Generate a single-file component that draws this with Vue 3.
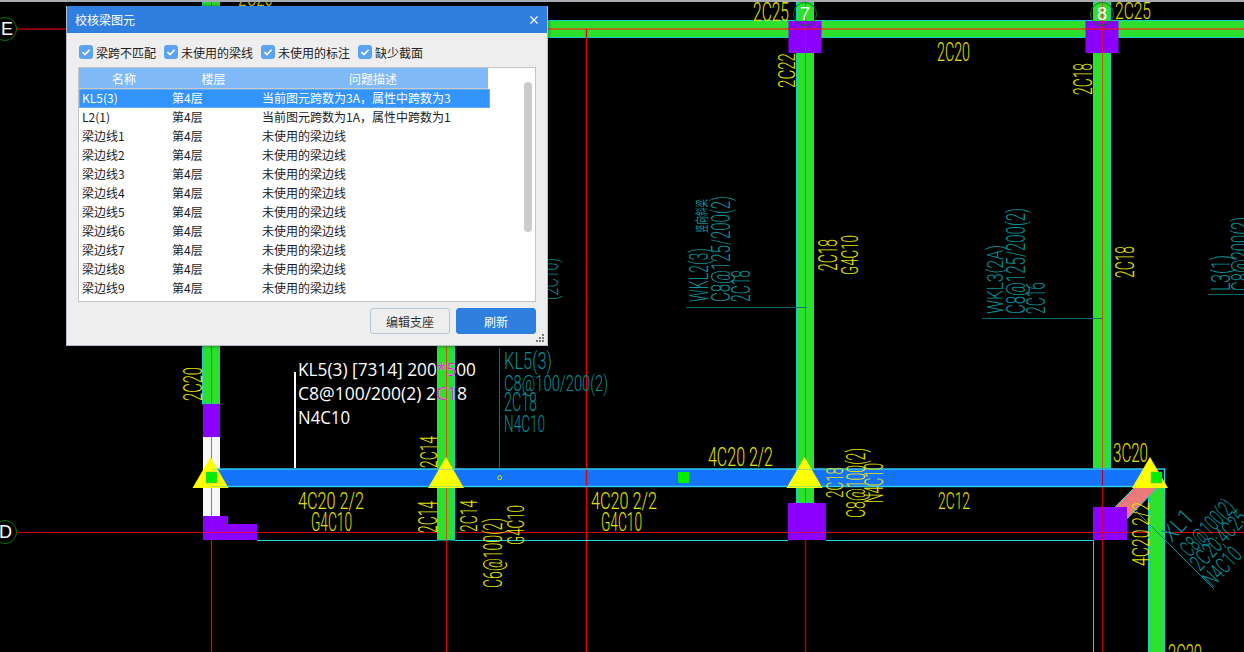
<script setup>
import { ref } from 'vue'

const Y = '#e2e200'
const T = '#0a8f96'

// [text, x0, y0, x1, y1, colour, rotated]
const labels = [
  ['2C20', 238, -12, 273, 6, Y],
  ['2C25', 753, 3, 789, 21, Y],
  ['2C25', 1115, 2, 1151, 19, Y],
  ['2C20', 937, 43, 970, 61, Y],
  ['2C22', 778, 53, 795, 88, Y, 1],
  ['2C18', 1074, 63, 1092, 95, Y, 1],
  ['2C18', 819, 239, 837, 271, Y, 1],
  ['G4C10', 841, 235, 858, 275, Y, 1],
  ['2C18', 1116, 246, 1134, 278, Y, 1],
  ['WKL2(3)', 690, 248, 708, 302, T, 1],
  ['C8@125/200(2)', 711, 196, 730, 302, T, 1],
  ['2C18', 732, 270, 750, 302, T, 1],
  ['WKL3(2A)', 987, 245, 1003, 314, T, 1],
  ['C8@125/200(2)', 1007, 208, 1025, 314, T, 1],
  ['2C16', 1027, 282, 1045, 314, T, 1],
  ['L3(1)', 1212, 255, 1230, 291, T, 1],
  ['C8@200(2)', 1232, 217, 1250, 291, T, 1],
  ['(2C10)', 543, 258, 558, 300, T, 1],
  ['KL5(3)', 504, 352, 552, 369, T],
  ['C8@100/200(2)', 504, 375, 608, 391, T],
  ['2C18', 504, 393, 537, 411, T],
  ['N4C10', 504, 415, 545, 432, T],
  ['2C20', 184, 367, 202, 401, Y, 1],
  ['2C14', 420, 436, 437, 468, Y, 1],
  ['4C20 2/2', 298, 492, 364, 509, Y],
  ['G4C10', 311, 513, 352, 531, Y],
  ['2C14', 419, 501, 437, 533, Y, 1],
  ['2C14', 460, 500, 477, 532, Y, 1],
  ['C6@100(2)', 484, 518, 502, 588, Y, 1],
  ['G4C10', 507, 505, 524, 545, Y, 1],
  ['4C20 2/2', 591, 492, 657, 509, Y],
  ['G4C10', 601, 513, 642, 531, Y],
  ['4C20 2/2', 708, 448, 773, 466, Y],
  ['2C18', 826, 467, 843, 498, Y, 1],
  ['C8@100(2)', 846, 448, 865, 518, Y, 1],
  ['N4C10', 865, 463, 883, 503, Y, 1],
  ['2C12', 938, 492, 970, 509, Y],
  ['3C20', 1113, 444, 1148, 462, Y],
  ['4C20 2/2', 1132, 502, 1149, 566, Y, 1],
  ['2C20', 1168, 645, 1202, 663, Y]
]

// [text, start x, start y, length] running up to the right at 45 degrees
const slanted = [
  ['XL1', 1172, 543, 34],
  ['C8@100(2)', 1190, 558, 68],
  ['2C20;4C25', 1200, 572, 72],
  ['N4C10', 1213, 588, 44]
]

const vBeams = [
  { x: 202, y0: -2, y1: 404 },
  { x: 437, y0: 340, y1: 540 },
  { x: 796, y0: 2, y1: 503 },
  { x: 1093, y0: 2, y1: 468 }
]

const triangles = [210.5, 446, 804.5, 1150]

const filters = ref([
  { name: '梁跨不匹配', on: true },
  { name: '未使用的梁线', on: true },
  { name: '未使用的标注', on: true },
  { name: '缺少截面', on: true }
])

const rows = [
  { name: 'KL5(3)', floor: '第4层', desc: '当前图元跨数为3A，属性中跨数为3' },
  { name: 'L2(1)', floor: '第4层', desc: '当前图元跨数为1A，属性中跨数为1' }
]
for (let i = 1; i <= 9; i++) {
  rows.push({ name: '梁边线' + i, floor: '第4层', desc: '未使用的梁边线' })
}
const selected = ref(0)

const labelAttrs = (l) => {
  const [, x0, y0, x1, y1, , rot] = l
  if (rot) {
    return {
      transform: `translate(${x1} ${y1}) rotate(-90)`,
      textLength: y1 - y0,
      'font-size': (x1 - x0) / 0.72
    }
  }
  return {
    transform: `translate(${x0} ${y1})`,
    textLength: x1 - x0,
    'font-size': (y1 - y0) / 0.72
  }
}
</script>

<template>
  <div class="page">
    <svg class="drawing" width="1244" height="652" viewBox="0 0 1244 652">
      <defs>
        <clipPath id="onBeam"><rect x="437" y="340" width="18" height="100" /></clipPath>
      </defs>

      <!-- grid lines -->
      <line x1="16" y1="29" x2="70" y2="29" stroke="#8a0000" stroke-width="2" />
      <line x1="586.5" y1="29" x2="586.5" y2="652" stroke="#e80000" stroke-width="1.5" />
      <line x1="18" y1="532.5" x2="1244" y2="532.5" stroke="#d80000" stroke-width="1.2" />
      <line x1="211.5" y1="346" x2="211.5" y2="652" stroke="#f00000" stroke-width="1.2" />
      <line x1="446.5" y1="340" x2="446.5" y2="652" stroke="#d80000" stroke-width="1.2" />
      <line x1="805.5" y1="2" x2="805.5" y2="652" stroke="#b80000" stroke-width="1.4" />
      <line x1="1102.5" y1="2" x2="1102.5" y2="652" stroke="#b80000" stroke-width="1.4" />

      <!-- top beam -->
      <rect x="520" y="20.5" width="724" height="17" fill="#2de02d" stroke="#12cfc8" />
      <rect x="520" y="28" width="724" height="2" fill="#a8701c" />
      <line x1="586.5" y1="29" x2="586.5" y2="38" stroke="#e80000" stroke-width="1.5" />

      <!-- vertical beams -->
      <g v-for="b in vBeams" :key="b.x">
        <rect :x="b.x + 0.5" :y="b.y0" width="17" :height="b.y1 - b.y0" fill="#2de02d" stroke="#12cfc8" />
        <line :x1="b.x + 9.5" :y1="b.y0" :x2="b.x + 9.5" :y2="b.y1" stroke="#c8501c" />
      </g>
      <rect x="203" y="437" width="17" height="79" fill="#f7f7f7" />
      <line x1="211.5" y1="437" x2="211.5" y2="516" stroke="#ff5050" />

      <!-- columns -->
      <path d="M203 404H220V437H203Z M203 516H228V524H257V540H203Z" fill="#8b00ff" />
      <rect x="788.5" y="21" width="33" height="32" fill="#8b00ff" />
      <rect x="1085.5" y="21" width="33" height="32" fill="#8b00ff" />
      <rect x="788" y="503" width="38" height="37" fill="#8b00ff" />
      <rect x="1093" y="507" width="34" height="33" fill="#8b00ff" />
      <line x1="788" y1="29" x2="822" y2="29" stroke="#d8103c" stroke-width="1.5" />
      <line x1="1085" y1="29" x2="1119" y2="29" stroke="#d8103c" stroke-width="1.5" />
      <line x1="805.5" y1="21" x2="805.5" y2="53" stroke="#d8103c" />
      <line x1="1102.5" y1="21" x2="1102.5" y2="53" stroke="#d8103c" />
      <line x1="203" y1="532.5" x2="257" y2="532.5" stroke="#e8004c" stroke-width="1.2" />
      <line x1="788" y1="532.5" x2="826" y2="532.5" stroke="#c8004c" stroke-width="1.2" />
      <line x1="1093" y1="532.5" x2="1127" y2="532.5" stroke="#c8004c" stroke-width="1.2" />
      <line x1="211.5" y1="516" x2="211.5" y2="540" stroke="#e8004c" />
      <line x1="805.5" y1="503" x2="805.5" y2="540" stroke="#c8004c" />
      <line x1="1102.5" y1="507" x2="1102.5" y2="540" stroke="#c8004c" />

      <!-- thin outline of the slab edge -->
      <path d="M257 540.5H437M455 540.5H788M826 540.5H1093.5V652" fill="none" stroke="#18dcdc" />

      <!-- lower right beam, covers the axis -->
      <rect x="1148.5" y="487" width="16" height="170" fill="#2de02d" stroke="#12cfc8" />

      <!-- blue selected beam -->
      <rect x="212" y="469" width="936" height="18" fill="#1473fb" />
      <line x1="586.5" y1="469" x2="586.5" y2="487" stroke="#e80000" stroke-width="1.5" />
      <line x1="1102.5" y1="469" x2="1102.5" y2="487" stroke="#b80020" />
      <path d="M212 469H1164.5V490M212 486.5H1140" fill="none" stroke="#2fc8ee" stroke-width="1.5" />

      <!-- inclined beam -->
      <path d="M1115 507L1135 487H1158L1127 519V507Z" fill="#ec7a7a" />
      <path d="M1115 507L1135 487M1158 487L1127 519" fill="none" stroke="#18cfd0" />

      <!-- leaders -->
      <line x1="295" y1="372" x2="295" y2="468" stroke="#fff" stroke-width="2" />
      <line x1="499.5" y1="348" x2="499.5" y2="468" stroke="#006a6e" stroke-width="1.2" />
      <circle cx="499.7" cy="477.7" r="2" fill="none" stroke="#e8e800" />
      <line x1="686" y1="307.5" x2="807" y2="307.5" stroke="#006a6e" />
      <line x1="982" y1="318.5" x2="1102" y2="318.5" stroke="#006a6e" />
      <line x1="1208" y1="294.5" x2="1244" y2="294.5" stroke="#006a6e" />
      <line x1="1132" y1="507" x2="1214" y2="589" stroke="#0a8f96" />

      <!-- cad texts -->
      <text
        v-for="(l, i) in labels"
        :key="i"
        class="cad"
        v-bind="labelAttrs(l)"
        :fill="l[5]"
        lengthAdjust="spacingAndGlyphs"
      >{{ l[0] }}</text>
      <text
        v-for="s in slanted"
        :key="s[0]"
        class="cad"
        font-size="23"
        :fill="T"
        :textLength="s[3]"
        lengthAdjust="spacingAndGlyphs"
        :transform="`translate(${s[1]} ${s[2]}) rotate(-47)`"
      >{{ s[0] }}</text>
      <text class="cjk" font-size="13" :fill="T" textLength="34" lengthAdjust="spacingAndGlyphs" transform="translate(706 233) rotate(-90)">竖向斜梁</text>

      <!-- supports -->
      <polygon
        v-for="t in triangles"
        :key="t"
        :points="`${t},457 ${t - 18},488 ${t + 18},488`"
        fill="#ffff00"
      />
      <path d="M212 469.5H229M212 486.5H229M428 469.5H464M428 486.5H464M787 469.5H823M787 486.5H823" stroke="#2fc8ee" stroke-opacity="0.4" />
      <rect x="206" y="472" width="11" height="11" fill="#00f000" stroke="#8fb070" stroke-width="0.5" />
      <rect x="678" y="472" width="11" height="11" fill="#00f000" />
      <rect x="1151" y="472" width="11" height="11" fill="#00f000" stroke="#8fb070" stroke-width="0.5" />

      <!-- axis bubbles -->
      <g fill="none" stroke="#0a7a0a">
        <circle cx="5" cy="29" r="11.5" />
        <circle cx="5" cy="532" r="11.5" />
        <circle cx="805" cy="14" r="11.5" />
        <circle cx="1102" cy="14" r="11.5" />
      </g>
      <text class="axis" x="1" y="35">E</text>
      <text class="axis" x="-1" y="538">D</text>
      <text class="axis" x="800" y="20">7</text>
      <text class="axis" x="1097" y="20">8</text>

      <!-- tooltip of the picked beam -->
      <g class="tip" fill="#fff">
        <text x="298" y="376" textLength="178" lengthAdjust="spacingAndGlyphs">KL5(3) [7314] 200*500</text>
        <text x="298" y="400" textLength="169" lengthAdjust="spacingAndGlyphs">C8@100/200(2) 2C18</text>
        <text x="298" y="424" textLength="52" lengthAdjust="spacingAndGlyphs">N4C10</text>
      </g>
      <g class="tip" fill="#d030c0" clip-path="url(#onBeam)">
        <text x="298" y="376" textLength="178" lengthAdjust="spacingAndGlyphs">KL5(3) [7314] 200*500</text>
        <text x="298" y="400" textLength="169" lengthAdjust="spacingAndGlyphs">C8@100/200(2) 2C18</text>
      </g>

      <rect x="0" y="0" width="1244" height="2" fill="#a9acb0" />
    </svg>

    <div class="dialog">
      <div class="title-bar">
        <span>校核梁图元</span>
        <svg class="close" width="10" height="10" viewBox="0 0 10 10">
          <path d="M1.5 1.5L8.5 8.5M8.5 1.5L1.5 8.5" stroke="#fff" stroke-width="1.3" />
        </svg>
      </div>

      <div class="filters">
        <label v-for="f in filters" :key="f.name" class="filter" @click="f.on = !f.on">
          <span class="box" :class="{ off: !f.on }">
            <svg v-if="f.on" width="14" height="14" viewBox="0 0 14 14">
              <path d="M3.5 7.2L6 9.6L10.6 4.8" fill="none" stroke="#fff" stroke-width="1.6" />
            </svg>
          </span>
          {{ f.name }}
        </label>
      </div>

      <div class="table">
        <div class="thead">
          <span class="c1">名称</span>
          <span class="c2">楼层</span>
          <span class="c3">问题描述</span>
        </div>
        <div
          v-for="(r, i) in rows"
          :key="r.name"
          class="row"
          :class="{ active: i === selected }"
          @click="selected = i"
        >
          <span class="c1">{{ r.name }}</span>
          <span class="c2">{{ r.floor }}</span>
          <span class="c3">{{ r.desc }}</span>
        </div>
        <div class="scroll-thumb"></div>
      </div>

      <div class="actions">
        <button class="btn">编辑支座</button>
        <button class="btn primary">刷新</button>
      </div>

      <svg class="grip" width="8" height="8" viewBox="0 0 8 8" fill="#7a7a7a">
        <rect x="6" y="0" width="2" height="2" />
        <rect x="3" y="3" width="2" height="2" />
        <rect x="6" y="3" width="2" height="2" />
        <rect x="0" y="6" width="2" height="2" />
        <rect x="3" y="6" width="2" height="2" />
        <rect x="6" y="6" width="2" height="2" />
      </svg>
    </div>
  </div>
</template>

<style scoped>
.page {
  position: relative;
  width: 1244px;
  height: 652px;
  background: #000;
  overflow: hidden;
}

.drawing {
  display: block;
}

.cad {
  font-family: Roboto, "Liberation Sans", sans-serif;
  font-weight: 300;
}

.cjk {
  font-family: "Noto Sans CJK SC", sans-serif;
}

.axis {
  font-family: "Liberation Sans", sans-serif;
  font-size: 18px;
  fill: #fff;
}

.tip text {
  font-family: "Open Sans", "Liberation Sans", sans-serif;
  font-size: 18px;
}

.dialog {
  position: absolute;
  left: 66px;
  top: 6px;
  width: 482px;
  height: 340px;
  box-sizing: border-box;
  display: flex;
  flex-direction: column;
  background: #eeeeee;
  border: 1px solid #b9bfca;
  border-top: none;
  box-shadow: 0 0 4px rgba(0, 0, 0, 0.5);
  font-family: "Noto Sans CJK SC", sans-serif;
  font-size: 12px;
  color: #222;
}

.title-bar {
  height: 27px;
  flex: none;
  display: flex;
  align-items: center;
  justify-content: space-between;
  padding: 0 8px 0 8px;
  background: #2e7fe0;
  color: #fff;
}

.filters {
  height: 34px;
  flex: none;
  display: flex;
  align-items: center;
  gap: 8px;
  padding: 4px 0 0 12px;
  box-sizing: border-box;
}

.filter {
  display: flex;
  align-items: center;
  gap: 3px;
  cursor: pointer;
}

.box {
  width: 14px;
  height: 14px;
  display: block;
  border-radius: 3px;
  background: #5ba4f5;
}

.box.off {
  background: #fff;
  box-shadow: inset 0 0 0 1px #aaa;
}

.box svg {
  display: block;
}

.table {
  position: relative;
  flex: none;
  height: 235px;
  margin: 0 11px 0 11px;
  box-sizing: border-box;
  background: #fff;
  border: 1px solid #c4c4c4;
  line-height: 17px;
}

.thead {
  display: flex;
  width: 409px;
  height: 21px;
  box-sizing: border-box;
  border-bottom: 1px solid #c8c8c8;
  background: #80b9f8;
  color: #fff;
  text-align: center;
  line-height: 21px;
}

.thead .c2 {
  width: 89px;
}

.c1 {
  width: 90px;
  flex: none;
}

.c2 {
  width: 90px;
  flex: none;
}

.c3 {
  flex: 1;
}

.row {
  display: flex;
  width: 411px;
  height: 19px;
  cursor: default;
  box-sizing: border-box;
  padding-left: 3px;
  color: #1c1c1c;
}

.row .c1 {
  width: 90px;
}

.row.active {
  background: #3294fc;
  box-shadow: inset 0 0 0 1px #62aef8;
  color: #fff;
}

.scroll-thumb {
  position: absolute;
  left: 445px;
  top: 14px;
  width: 8px;
  height: 150px;
  border-radius: 4px;
  background: #cbcbcb;
}

.actions {
  flex: none;
  display: flex;
  justify-content: flex-end;
  gap: 6px;
  padding: 6px 11px 0 0;
}

.btn {
  width: 80px;
  height: 26px;
  padding: 0;
  border: 1px solid #b8c4d8;
  border-radius: 3px;
  background: #eeeeee;
  color: #333;
  font: inherit;
}

.btn.primary {
  border-color: #2e7fe0;
  background: #2e7fe0;
  color: #fff;
}

.grip {
  position: absolute;
  right: 3px;
  bottom: 3px;
}
</style>

<style>
html,
body {
  margin: 0;
  background: #000;
}
</style>
